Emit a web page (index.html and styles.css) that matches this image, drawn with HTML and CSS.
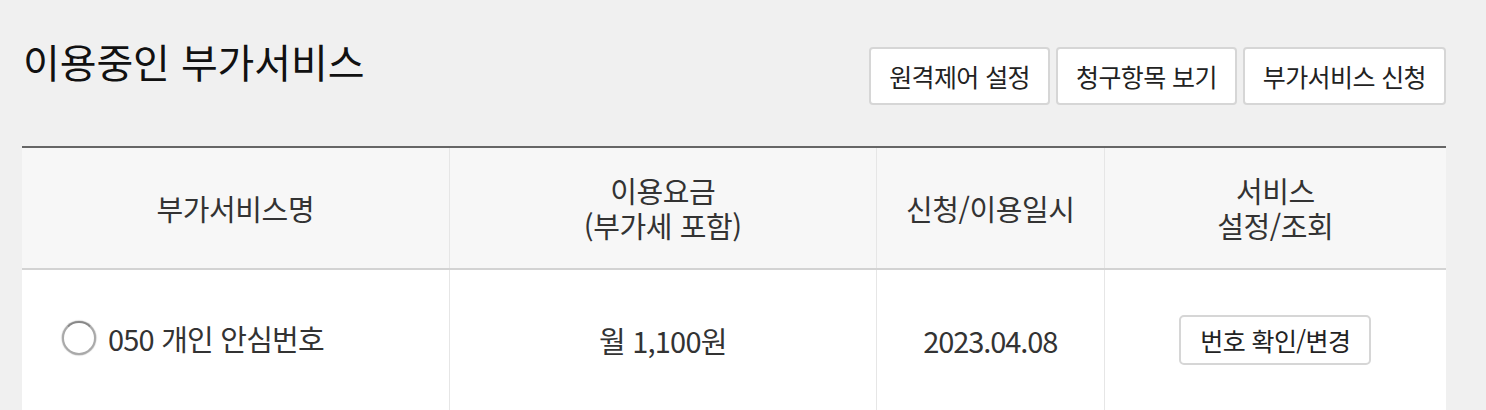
FILE: index.html
```html
<!DOCTYPE html>
<html lang="ko">
<head>
<meta charset="utf-8">
<title>이용중인 부가서비스</title>
<link rel="stylesheet" href="styles.css">
</head>
<body>
<div class="wrap">
  <div class="head">
    <h2 class="title">이용중인 부가서비스</h2>
    <div class="actions">
      <button class="btn" type="button">원격제어 설정</button>
      <button class="btn" type="button">청구항목 보기</button>
      <button class="btn" type="button">부가서비스 신청</button>
    </div>
  </div>
  <table class="tbl">
    <colgroup>
      <col class="c1"><col class="c2"><col class="c3"><col class="c4">
    </colgroup>
    <thead>
      <tr>
        <th>부가서비스명</th>
        <th><span class="ln">이용요금</span><span class="ln">(부가세 포함)</span></th>
        <th>신청/이용일시</th>
        <th><span class="ln">서비스</span><span class="ln">설정/조회</span></th>
      </tr>
    </thead>
    <tbody>
      <tr>
        <td class="name"><label class="radio-label"><span class="radio"></span>050 개인 안심번호</label></td>
        <td>월 1,100원</td>
        <td class="date">2023.04.08</td>
        <td><button class="btn-sm" type="button">번호 확인/변경</button></td>
      </tr>
    </tbody>
  </table>
</div>
</body>
</html>
```

FILE: styles.css
```css
html, body {
  margin: 0;
  padding: 0;
  background: #f0f0f0;
}
body {
  font-family: "Noto Sans CJK KR", "Noto Sans", sans-serif;
  color: #333;
}
.wrap {
  padding: 0 40px 0 22px;
}
.head {
  display: flex;
  justify-content: space-between;
  align-items: flex-start;
  height: 146px;
}
.title {
  margin: 0;
  padding: 37px 0 0 1px;
  font-size: 40px;
  font-weight: 400;
  line-height: 48px;
  color: #111;
  letter-spacing: -0.1px;
}
.actions {
  display: flex;
  gap: 6px;
  padding-top: 47px;
}
.btn {
  height: 58px;
  padding: 0 18px;
  background: #fff;
  border: 2px solid #d6d6d6;
  border-radius: 4px;
  font-family: inherit;
  font-size: 25px;
  color: #222;
  letter-spacing: -0.6px;
}
.tbl {
  width: 100%;
  border-collapse: collapse;
  table-layout: fixed;
  border-top: 2px solid #666;
}
.c1, .c2 { width: 30%; }
.c3 { width: 16%; }
.c4 { width: 24%; }
.tbl th {
  height: 120px;
  padding: 0;
  background: #f7f7f7;
  font-weight: 400;
  font-size: 29px;
  line-height: 35px;
  color: #333;
  letter-spacing: -0.4px;
  border-left: 1px solid #e6e6e6;
  border-bottom: 2px solid #d3d3d3;
}
.tbl th .ln {
  display: block;
  height: 35px;
}
.tbl td {
  height: 140px;
  padding: 0;
  background: #fff;
  text-align: center;
  font-size: 29px;
  color: #333;
  letter-spacing: -0.8px;
  border-left: 1px solid #e6e6e6;
}
.tbl td.date {
  letter-spacing: -1.1px;
}
.tbl th:first-child, .tbl td:first-child {
  border-left: 0;
}
.tbl td.name {
  text-align: left;
  padding-left: 40px;
}
.radio-label {
  display: inline-flex;
  align-items: center;
  gap: 12px;
}
.radio {
  display: inline-block;
  width: 30px;
  height: 30px;
  border: 2px solid #a9a9a9;
  border-top-color: #888;
  border-radius: 50%;
  background: #fff;
  box-shadow: 0 0 1px 0.5px rgba(0,0,0,0.25);
}
.btn-sm {
  height: 50px;
  padding: 0 19px;
  background: #fff;
  border: 2px solid #d6d6d6;
  border-radius: 5px;
  font-family: inherit;
  font-size: 25px;
  color: #222;
  letter-spacing: -0.6px;
}
```
